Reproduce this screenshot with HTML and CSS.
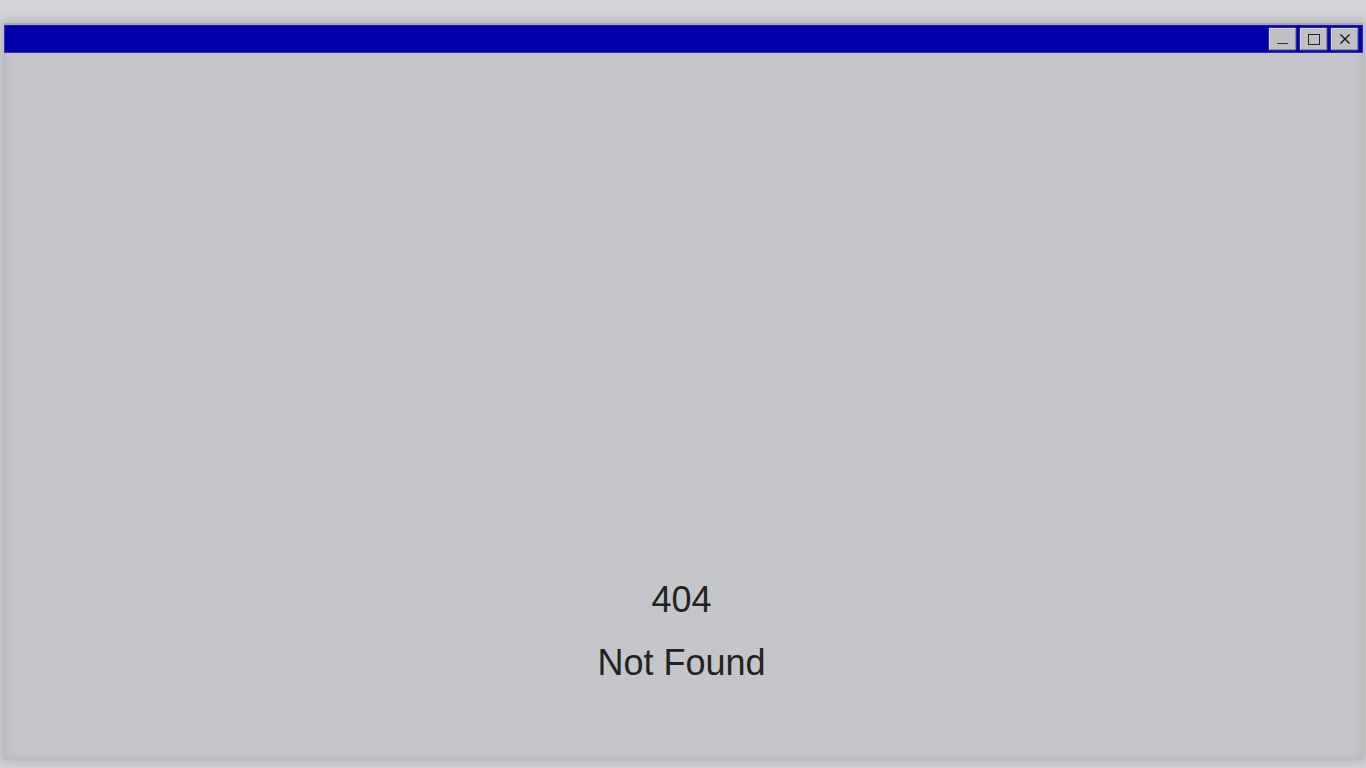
FILE: index.html
```html
<!DOCTYPE html>
<html lang="en">
<head>
<meta charset="utf-8">
<title>404</title>
<link rel="stylesheet" href="styles.css">
</head>
<body>
<div class="window">
  <div class="titlebar">
    <div class="controls">
      <button class="btn min" aria-label="Minimize"><span class="bar"></span></button>
      <button class="btn max" aria-label="Maximize"><span class="box"></span></button>
      <button class="btn close" aria-label="Close">
        <svg width="12" height="12" viewBox="0 0 12 12"><path d="M1.5 1.5 L10.5 10.5 M10.5 1.5 L1.5 10.5" stroke="#111" stroke-width="1.4"/></svg>
      </button>
    </div>
  </div>
  <div class="content">
    <div class="code">404</div>
    <div class="msg">Not Found</div>
  </div>
</div>
</body>
</html>
```
FILE: styles.css
```css
html, body {
  margin: 0;
  height: 100%;
}
body {
  background: #d3d5d8;
  font-family: "Liberation Sans", Arial, sans-serif;
  padding: 23px 3px 10px 4px;
  box-sizing: border-box;
  overflow: hidden;
}
.window {
  height: 734px;
  background: #c4c6ca;
  box-shadow: 0 0 10px 3px rgba(0,0,0,0.16), inset 0 0 8px rgba(0,0,0,0.10);
  display: flex;
  flex-direction: column;
  border-top: 2px solid #a4a6aa;
}
.titlebar {
  height: 28px;
  background: #0000a8;
  border: 1px solid #3030c0;
  border-top-color: #1a1aa0;
  display: flex;
  justify-content: flex-end;
  align-items: center;
  padding-right: 4px;
  box-sizing: border-box;
}
.controls {
  display: flex;
  gap: 4px;
}
.btn {
  width: 27px;
  height: 22px;
  padding: 0;
  margin: 0;
  background: #c0c0c4;
  border: 1px solid #d8d8dc;
  border-right-color: #8a8a90;
  border-bottom-color: #8a8a90;
  box-shadow: 0 0 2px rgba(200,200,230,0.6);
  display: flex;
  align-items: center;
  justify-content: center;
  box-sizing: border-box;
}
.bar {
  width: 11px;
  height: 1px;
  background: #333;
  margin-top: 9px;
}
.box {
  width: 12px;
  height: 11px;
  border: 1.5px solid #222;
  box-sizing: border-box;
}
.content {
  flex: 1;
  display: flex;
  flex-direction: column;
  align-items: center;
  padding-top: 526px;
  padding-right: 4px;
  color: #222;
  font-size: 36px;
}
.code {
  line-height: 41px;
}
.msg {
  margin-top: 22px;
  line-height: 41px;
}
```
